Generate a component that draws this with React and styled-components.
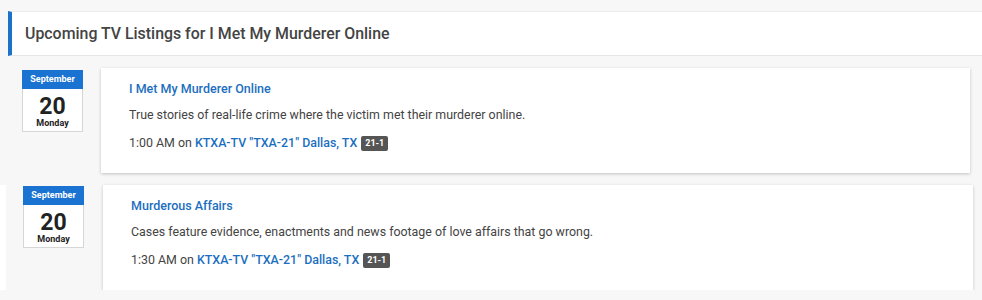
import React from "react";
import styled, { createGlobalStyle } from "styled-components";

const GlobalStyle = createGlobalStyle`
  body {
    margin: 0;
    background-color: #f7f7f7;
    font-family: Roboto, "Liberation Sans", sans-serif;
  }
`;

const Page = styled.div`
  padding-top: 11px;
`;

const Header = styled.div`
  margin-left: 8px;
  height: 43px;
  display: flex;
  align-items: center;
  background-color: #ffffff;
  border-top: 1px solid #ececec;
  border-bottom: 1px solid #e6e6e6;
  border-left: 4px solid #1b72c9;
  padding-left: 13px;
`;

const HeaderTitle = styled.h2`
  margin: 0;
  font-size: 15.9px;
  font-weight: 500;
  color: #444;
`;

const Row = styled.div`
  display: flex;
  align-items: flex-start;
  margin-top: ${(p) => p.$top}px;
  padding-left: ${(p) => p.$indent}px;
  border-left: ${(p) => (p.$edge ? "6px solid #ffffff" : "none")};
  gap: ${(p) => p.$gap}px;
`;

const DateBox = styled.div`
  width: 61px;
  margin-top: ${(p) => p.$top}px;
  background-color: #ffffff;
  border: 1px solid #d6d6d6;
  box-sizing: border-box;
  text-align: center;
  color: #222;
  font-weight: 700;
`;

const Month = styled.div`
  height: 19px;
  line-height: 19px;
  background-color: #1a73d1;
  color: #ffffff;
  font-size: 9px;
  margin: -1px -1px 0;
`;

const Day = styled.div`
  font-size: 23px;
  line-height: 18px;
  margin-top: 9px;
`;

const Weekday = styled.div`
  font-size: 9px;
  line-height: 9px;
  margin-top: 3px;
  padding-bottom: 3px;
`;

const Card = styled.div`
  width: ${(p) => p.$width}px;
  box-sizing: border-box;
  background-color: #ffffff;
  box-shadow: 0 1px 3px rgba(0, 0, 0, 0.22);
  padding: 13px 28px 21px;
`;

const ShowTitle = styled.a`
  display: block;
  font-size: 12.5px;
  line-height: 16px;
  font-weight: 500;
  color: #1c6fc0;
  text-decoration: none;
`;

const Description = styled.p`
  margin: 9px 0 0;
  font-size: 12.4px;
  line-height: 18px;
  color: #444;
`;

const AirTime = styled.p`
  margin: 10px 0 0;
  font-size: 12.4px;
  line-height: 18px;
  color: #444;
`;

const Station = styled.a`
  color: #1c6fc0;
  font-weight: 500;
  text-decoration: none;
`;

const Channel = styled.span`
  display: inline-block;
  margin-left: 4px;
  padding: 0 4px;
  line-height: 15px;
  border-radius: 2px;
  background-color: #555;
  color: #ffffff;
  font-size: 9px;
  font-weight: 700;
  vertical-align: 1px;
`;

const listings = [
  {
    title: "I Met My Murderer Online",
    description:
      "True stories of real-life crime where the victim met their murderer online.",
    time: "1:00 AM",
    layout: { top: 12, indent: 22, gap: 18, width: 869, dateTop: 2, edge: false },
  },
  {
    title: "Murderous Affairs",
    description:
      "Cases feature evidence, enactments and news footage of love affairs that go wrong.",
    time: "1:30 AM",
    layout: { top: 12, indent: 17, gap: 19, width: 870, dateTop: 1, edge: true },
  },
];

const App = () => (
  <Page>
    <GlobalStyle />
    <Header>
      <HeaderTitle>Upcoming TV Listings for I Met My Murderer Online</HeaderTitle>
    </Header>
    {listings.map((item) => (
      <Row
        key={item.title}
        $top={item.layout.top}
        $indent={item.layout.indent}
        $gap={item.layout.gap}
        $edge={item.layout.edge}
      >
        <DateBox $top={item.layout.dateTop}>
          <Month>September</Month>
          <Day>20</Day>
          <Weekday>Monday</Weekday>
        </DateBox>
        <Card $width={item.layout.width}>
          <ShowTitle href="#">{item.title}</ShowTitle>
          <Description>{item.description}</Description>
          <AirTime>
            {item.time} on <Station href="#">KTXA-TV "TXA-21" Dallas, TX</Station>
            <Channel>21-1</Channel>
          </AirTime>
        </Card>
      </Row>
    ))}
  </Page>
);

export default App;
